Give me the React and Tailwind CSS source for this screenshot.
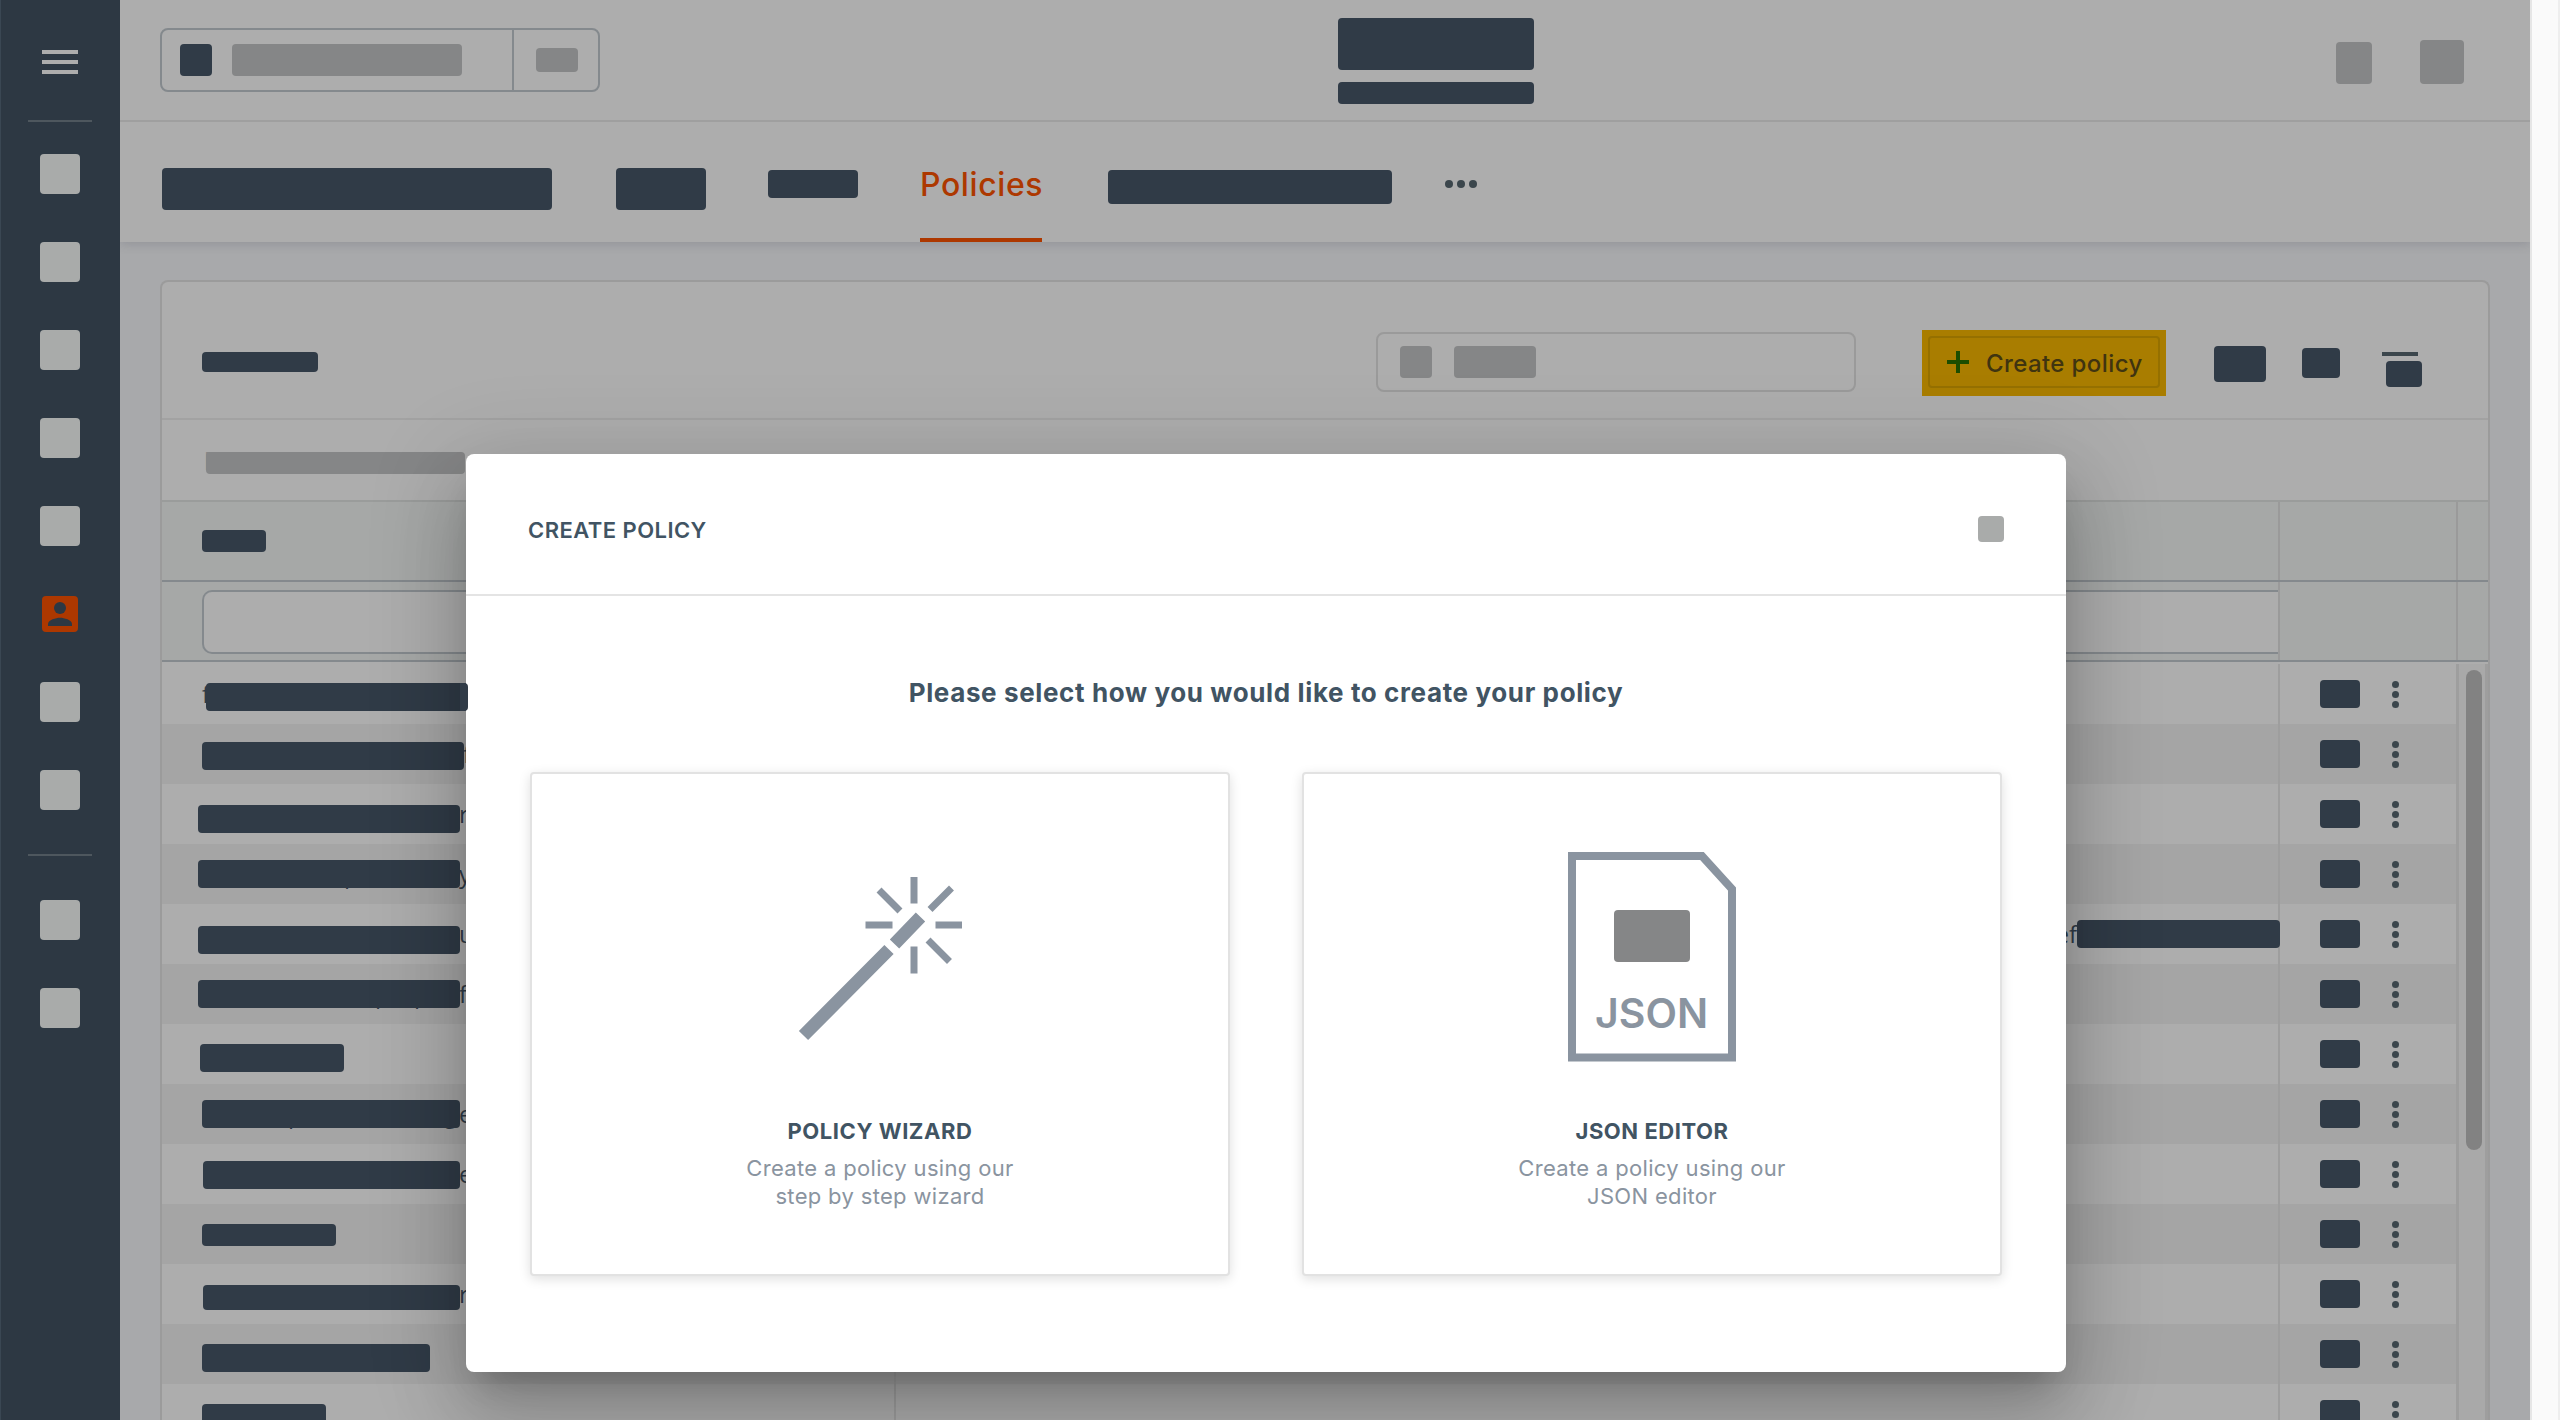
import React from "react";

function Block({ className = "" }) {
  return <div className={"relative shrink-0 rounded bg-[#303b47] " + className} />;
}

function NavSquare({ className = "" }) {
  return <div className={"h-10 w-10 shrink-0 rounded bg-[#a9abaa] " + className} />;
}

function Sidebar() {
  return (
    <nav className="flex w-[120px] shrink-0 flex-col items-center border-l border-[#3a4753] bg-[#2d3843] pr-px">
      <div className="mt-[50px] flex flex-col gap-1.5">
        <div className="h-1 w-9 bg-[#adadad]" />
        <div className="h-1 w-9 bg-[#adadad]" />
        <div className="h-1 w-9 bg-[#adadad]" />
      </div>
      <div className="mt-[46px] h-0.5 w-16 bg-[#4e575e]" />
      <div className="mt-8 flex flex-col items-center gap-12">
        <NavSquare />
        <NavSquare />
        <NavSquare />
        <NavSquare />
        <NavSquare />
        <svg className="my-[2px] h-9 w-9" viewBox="0 0 36 36">
          <rect width="36" height="36" rx="4" fill="#ad3800" />
          <circle cx="18" cy="12" r="6" fill="#2d3843" />
          <path d="M6 30v-2c0-4 8-6.200 12-6.200s12 2.200 12 6.200v2z" fill="#2d3843" />
        </svg>
        <NavSquare />
        <NavSquare />
      </div>
      <div className="mt-11 h-0.5 w-16 bg-[#4e575e]" />
      <div className="mt-11 flex flex-col gap-12">
        <NavSquare />
        <NavSquare />
      </div>
    </nav>
  );
}

function TopBar() {
  return (
    <header className="flex h-[122px] shrink-0 border-b-2 border-[#9f9f9f] pl-10">
      <div className="mt-7 flex h-16 w-[440px] shrink-0 rounded-lg border-2 border-[#84898d]">
        <div className="flex w-[352px] border-r-2 border-[#84898d] pl-[18px] pt-[14px]">
          <Block className="h-8 w-8" />
          <div className="ml-5 h-8 w-[230px] rounded bg-[#858687]" />
        </div>
        <div className="ml-[22px] mt-[18px] h-6 w-[42px] rounded bg-[#858687]" />
      </div>
      <div className="ml-[738px] mt-[18px] flex flex-col gap-3">
        <Block className="h-[52px] w-[196px]" />
        <Block className="h-[22px] w-[196px]" />
      </div>
      <div className="ml-[802px] mt-[42px] h-[42px] w-9 rounded bg-[#858687]" />
      <div className="ml-12 mt-10 h-11 w-11 rounded bg-[#858687]" />
    </header>
  );
}

function Tabs() {
  return (
    <div className="flex h-[120px] shrink-0 pl-[42px]">
      <Block className="mt-[46px] h-[42px] w-[390px]" />
      <Block className="ml-16 mt-[46px] h-[42px] w-[90px]" />
      <Block className="ml-[62px] mt-12 h-7 w-[90px]" />
      <div className="ml-[62px] flex w-[122px] shrink-0 flex-col border-b-4 border-[#ad3800] pt-[42px]">
        <span className="whitespace-nowrap text-[32px] leading-[42px] font-medium tracking-[0.6px] text-[#ad3800]">Policies</span>
      </div>
      <Block className="ml-[66px] mt-12 h-[34px] w-[284px]" />
      <div className="ml-[53px] mt-[58px] flex gap-1">
        <div className="h-2 w-2 rounded-full bg-[#3b464c]" />
        <div className="h-2 w-2 rounded-full bg-[#3b464c]" />
        <div className="h-2 w-2 rounded-full bg-[#3b464c]" />
      </div>
    </div>
  );
}

function CardToolbar() {
  return (
    <div className="flex h-[138px] shrink-0 border-b-2 border-[#a2a2a2] pl-10">
      <Block className="mt-[70px] h-5 w-[116px]" />
      <div className="ml-[1058px] mt-[50px] flex h-[60px] w-[480px] shrink-0 rounded-lg border-2 border-[#9a9a9a] pl-[22px] pt-3">
        <div className="h-8 w-8 rounded bg-[#858687]" />
        <div className="ml-[22px] h-8 w-[82px] rounded bg-[#858687]" />
      </div>
      <div className="ml-[66px] mt-12 h-[66px] w-[244px] shrink-0 bg-[#a97d00] p-1.5">
        <div className="flex h-[52px] w-[232px] items-center rounded border-2 border-[#957000] pl-[17px]">
          <svg className="h-[22px] w-[22px]" viewBox="0 0 22 22" fill="none" stroke="#1b4d00" strokeWidth="4">
            <path d="M11 0v22M0 11h22" />
          </svg>
          <span className="ml-[17px] whitespace-nowrap pt-1 text-[24px] font-medium tracking-[0.4px] text-[#3f3410]">Create policy</span>
        </div>
      </div>
      <Block className="ml-12 mt-16 h-9 w-[52px]" />
      <Block className="ml-9 mt-[66px] h-[30px] w-[38px]" />
      <div className="ml-[42px] mt-[70px]">
        <div className="h-1 w-9 bg-[#3b464c]" />
        <Block className="ml-1 mt-[5px] h-[26px] w-9" />
      </div>
    </div>
  );
}

function Dots() {
  return (
    <div className="ml-8 mt-[17px] flex flex-col gap-[3px]">
      <div className="h-[7px] w-[7px] rounded-full bg-[#3b464c]" />
      <div className="h-[7px] w-[7px] rounded-full bg-[#3b464c]" />
      <div className="h-[7px] w-[7px] rounded-full bg-[#3b464c]" />
    </div>
  );
}

/* "peeks" are the letters that stick out from behind a redaction bar. */
const rows = [
  { bar: "ml-11 mt-[19px] h-7 w-[262px]", peeks: [["f", 40]] },
  { bar: "ml-10 mt-[18px] h-7 w-[262px]", tail: "f" },
  { bar: "ml-9 mt-[21px] h-7 w-[262px]", tail: "r" },
  { bar: "ml-9 mt-4 h-7 w-[262px]", tail: "y", peeks: [["p", 182]] },
  { bar: "ml-9 mt-[22px] h-7 w-[262px]", tail: "u", wide: true },
  { bar: "ml-9 mt-4 h-7 w-[262px]", tail: "f", peeks: [["p", 213], ["p", 252]] },
  { bar: "ml-[38px] mt-5 h-7 w-[144px]" },
  { bar: "ml-10 mt-4 h-7 w-[258px]", tail: "e", peeks: [["p", 126], ["g", 282]] },
  { bar: "ml-[41px] mt-[17px] h-7 w-[257px]", tail: "e", peeks: [["p", 127], ["g", 283]] },
  { bar: "ml-10 mt-5 h-[22px] w-[134px]" },
  { bar: "ml-[41px] mt-[21px] h-[25px] w-[257px]", tail: "r" },
  { bar: "ml-10 mt-5 h-7 w-[228px]" },
  { bar: "ml-10 mt-5 h-7 w-[124px]" },
];

function Row({ row, odd }) {
  return (
    <div className={"flex h-[60px] shrink-0 text-[24px] leading-8 text-[#303b47] " + (odd ? "bg-[#a5a5a5]" : "bg-[#adadad]")}>
      <div className="relative flex w-[734px] shrink-0 border-r-2 border-[#9e9e9e] font-['Open_Sans',sans-serif]">
        {(row.peeks || []).map(([letter, x]) => (
          <span key={x} className="absolute top-[14px]" style={{ left: x }}>
            {letter}
          </span>
        ))}
        <Block className={row.bar} />
        {row.tail && <span className="-ml-px mt-[14px]">{row.tail}</span>}
      </div>
      <div className="flex w-[1384px] shrink-0 justify-end border-r-2 border-[#9e9e9e] font-['Open_Sans',sans-serif]">
        {row.wide && (
          <>
            <span className="mt-[14px]">ef</span>
            <Block className="-mr-0.5 mt-4 h-7 w-[203px]" />
          </>
        )}
      </div>
      <Block className="ml-10 mt-4 h-7 w-10" />
      <Dots />
    </div>
  );
}

function Table() {
  return (
    <div className="flex h-[920px] shrink-0 flex-col">
      <div className="flex h-20 shrink-0 border-b-2 border-[#84898d] bg-[#a6a8a7]">
        <div className="w-[2118px] shrink-0 border-r-2 border-[#9a9a9a] pl-10 pt-7">
          <Block className="h-[22px] w-16" />
        </div>
        <div className="w-[178px] shrink-0 border-r-2 border-[#9a9a9a]" />
      </div>
      <div className="flex h-20 shrink-0 border-b-2 border-[#84898d] bg-[#a6a8a7]">
        <div className="w-[2118px] shrink-0 border-r-2 border-[#9a9a9a] pl-10 pt-2">
          <div className="h-16 rounded-l-[10px] border-2 border-r-0 border-[#84898d] bg-[#adadad]" />
        </div>
        <div className="w-[178px] shrink-0 border-r-2 border-[#9a9a9a]" />
      </div>
      <div className="h-0.5 shrink-0" />
      <div className="flex">
        <div className="w-[2294px] shrink-0">
          {rows.map((row, i) => (
            <Row key={i} row={row} odd={i % 2 === 1} />
          ))}
        </div>
        <div className="w-8 shrink-0 border-x-[3px] border-[#9e9e9e] bg-[#a9a9a9] pl-[7px] pt-1.5">
          <div className="h-[480px] w-4 rounded-full bg-[#828282]" />
        </div>
      </div>
    </div>
  );
}

function WandIcon() {
  return (
    <svg className="h-[164px] w-[164px]" viewBox="0 0 164 164" fill="none" stroke="#8a94a0">
      <path d="M5.500 158.500 91 72.500M96.500 67 122.500 40" strokeWidth="13" />
      <path
        d="M116 3v20M116 73v20M71 48h20M141 48h20M83.500 15.500 99.500 31.500M151 13.500 134.500 30M132.500 65.500 149 82"
        strokeWidth="7"
        strokeLinecap="square"
      />
    </svg>
  );
}

function JsonIcon() {
  return (
    <div className="relative h-[210px] w-[168px]">
      <svg className="h-full w-full" viewBox="0 0 168 210" fill="none" stroke="#8a94a0" strokeWidth="8">
        <path d="M4 4h130l30 33v168.500H4z" />
      </svg>
      <div className="absolute left-[46px] top-[58px] h-[52px] w-[76px] rounded bg-[#858687]" />
      <span className="absolute left-[27px] top-[136px] text-[41px] leading-[50px] font-semibold text-[#8a94a0]">JSON</span>
    </div>
  );
}

function Option({ icon, title, lines }) {
  return (
    <button className="flex h-[504px] w-[700px] flex-col items-center rounded border-2 border-[#e2e2e2] bg-white text-center shadow-[0_3px_12px_rgba(0,0,0,0.13)]">
      <div className="flex h-[343px] w-full justify-center">{icon}</div>
      <span className="block whitespace-nowrap text-[22px] leading-7 font-bold tracking-[0.55px] text-[#415463]">{title}</span>
      <span className="mt-[9px] block whitespace-nowrap text-[22px] leading-7 tracking-[0.33px] text-[#8a94a0]">{lines[0]}</span>
      <span className="block whitespace-nowrap text-[22px] leading-7 tracking-[0.33px] text-[#8a94a0]">{lines[1]}</span>
    </button>
  );
}

function Dialog() {
  return (
    <div className="absolute left-[466px] top-[454px] flex h-[918px] w-[1600px] flex-col rounded-lg bg-white shadow-[0_22px_30px_-14px_rgba(0,0,0,0.2),0_48px_76px_6px_rgba(0,0,0,0.14),0_18px_92px_16px_rgba(0,0,0,0.12)]">
      <div className="flex h-[142px] shrink-0 items-center justify-between border-b-2 border-[#e4e4e4] pl-[62px] pr-[62px] pt-[10px]">
        <h2 className="pt-0.5 text-[22px] leading-7 font-semibold tracking-[0.45px] text-[#415463]">CREATE POLICY</h2>
        <div className="h-[26px] w-[26px] rounded bg-[#a9abaa]" />
      </div>
      <h3 className="mt-[79px] text-center text-[26px] leading-9 font-bold tracking-[0.62px] text-[#415463]">
        Please select how you would like to create your policy
      </h3>
      <div className="mt-[61px] flex gap-[72px] pl-16">
        <Option
          icon={<div className="mt-[103px]"><WandIcon /></div>}
          title="POLICY WIZARD"
          lines={["Create a policy using our", "step by step wizard"]}
        />
        <Option
          icon={<div className="mt-[78px]"><JsonIcon /></div>}
          title="JSON EDITOR"
          lines={["Create a policy using our", "JSON editor"]}
        />
      </div>
    </div>
  );
}

export default function App() {
  return (
    <div className="relative flex h-[1420px] w-[2560px] overflow-hidden bg-[#fafafa] font-['Inter',sans-serif]">
      <Sidebar />
      <main className="flex w-[2410px] shrink-0 flex-col overflow-hidden bg-[#a8a9ab]">
        <div className="flex shrink-0 flex-col bg-[#adadad] shadow-[0_2px_10px_rgba(60,60,80,0.2)]">
          <TopBar />
          <Tabs />
        </div>
        <section className="ml-10 mt-[38px] flex w-[2330px] shrink-0 flex-col rounded-t-lg border-2 border-b-0 border-[#9b9b9b] bg-[#adadad]">
          <CardToolbar />
          <div className="flex h-[82px] shrink-0 border-b-2 border-[#9a9c9b] pl-[42px] pt-8">
            <span className="-mt-[6px] w-0.5 text-[24px] leading-8 text-[#858687]">P</span>
            <div className="relative h-[22px] w-[259px] rounded bg-[#858687]" />
          </div>
          <Table />
        </section>
      </main>
      <div className="w-[30px] shrink-0 border-x-2 border-l-[#e6e6e6] border-r-[#eeeeee]" />
      <Dialog />
      <div className="absolute left-[460px] top-[683px] h-7 w-2 rounded-r bg-[#303b47]" />
    </div>
  );
}
